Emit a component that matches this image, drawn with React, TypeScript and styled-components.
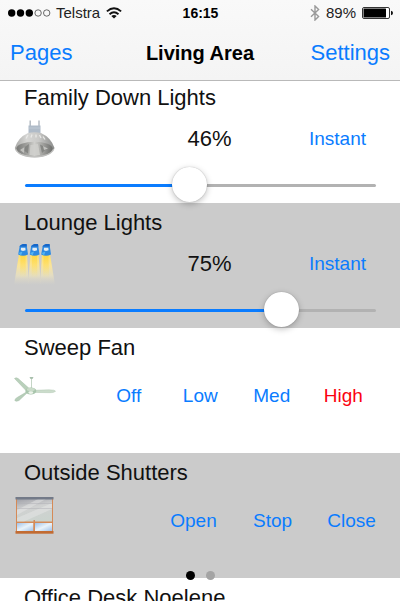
import React, { useState } from "react";
import styled, { createGlobalStyle } from "styled-components";

const BLUE = "#0a7cff";

const GlobalStyle = createGlobalStyle`
  * { box-sizing: border-box; }
  body {
    margin: 0;
    background: #fff;
    color: #000;
    font-family: "Liberation Sans", Arial, sans-serif;
  }
`;

const Screen = styled.div`
  position: relative;
  display: flex;
  flex-direction: column;
  height: 100vh;
  overflow: hidden;
`;

const Header = styled.header`
  position: relative;
  z-index: 1;
  flex: none;
  background: linear-gradient(#f9f9f9, #f4f4f4);
  border-bottom: 1px solid #b9b9b9;
`;

const StatusBar = styled.div`
  display: grid;
  grid-template-columns: 1fr auto 1fr;
  align-items: center;
  height: 26px;
  padding: 0 7px 0 8px;
  font-size: 15px;
  line-height: 20px;
  color: #222;
`;

const StatusGroup = styled.div<{ $end?: boolean }>`
  display: flex;
  align-items: center;
  justify-content: ${(p) => (p.$end ? "flex-end" : "flex-start")};
  gap: ${(p) => (p.$end ? 6 : 5)}px;
`;

const Clock = styled.time`
  font-size: 14px;
  font-weight: 700;
  color: #000;
`;

const NavBar = styled.nav`
  display: grid;
  grid-template-columns: 1fr auto 1fr;
  align-items: center;
  height: 54px;
  padding: 0 10px;
`;

const PageTitle = styled.h1`
  margin: 0;
  font-size: 20px;
  line-height: 24px;
  font-weight: 700;
`;

const TextButton = styled.button<{ $size?: number; $active?: boolean; $end?: boolean }>`
  padding: 0;
  border: 0;
  background: none;
  font-family: inherit;
  font-size: ${(p) => p.$size ?? 19}px;
  line-height: 24px;
  color: ${(p) => (p.$active ? "#fb0210" : BLUE)};
  justify-self: ${(p) => (p.$end ? "end" : "start")};
  cursor: pointer;
`;

const DeviceList = styled.ul`
  flex: 1;
  min-height: 0;
  margin: -3px 0 0;
  padding: 0;
  overflow: hidden;
  list-style: none;
`;

const Device = styled.li`
  display: flex;
  flex-direction: column;
  height: 125px;
  padding-top: 7px;
  background: #fff;

  &:nth-child(even) {
    background: #cbcbcb;
  }
`;

const DeviceName = styled.h2`
  margin: 0;
  padding-left: 24px;
  font-size: 22px;
  line-height: 26px;
  font-weight: 400;
  color: #111;
`;

const Controls = styled.div<{ $tall?: boolean }>`
  display: flex;
  align-items: center;
  height: ${(p) => (p.$tall ? 70 : 56)}px;
  padding-left: 14px;
`;

const IconBox = styled.div`
  flex: none;
  align-self: flex-start;
  width: 42px;
  height: 42px;
  margin-top: 8px;

  svg {
    display: block;
  }
`;

const Level = styled.output`
  flex: 1;
  margin-left: 54px;
  font-size: 22px;
  line-height: 24px;
  text-align: center;
  color: #111;
`;

const InstantSlot = styled.div`
  margin-right: 34px;
`;

const Choices = styled.div<{ $start: number; $end: number }>`
  flex: 1;
  display: grid;
  grid-auto-flow: column;
  grid-auto-columns: 1fr;
  margin: 0 ${(p) => p.$end}px 0 ${(p) => p.$start}px;

  ${TextButton} {
    justify-self: center;
  }
`;

const Slider = styled.input`
  appearance: none;
  display: block;
  height: 36px;
  margin: 0 24px 0 25px;
  background: none;
  cursor: pointer;

  &::-webkit-slider-runnable-track {
    height: 3px;
    border-radius: 2px;
    background: linear-gradient(
      to right,
      ${BLUE} var(--fill),
      #b2b2b2 var(--fill)
    );
  }

  &::-webkit-slider-thumb {
    appearance: none;
    width: 35px;
    height: 35px;
    margin-top: -17px;
    border-radius: 50%;
    background: #fff;
    box-shadow: 0 0 1px rgba(0, 0, 0, 0.3), 0 2px 6px rgba(0, 0, 0, 0.25);
  }
`;

const PageDots = styled.div`
  position: absolute;
  z-index: 1;
  left: 0;
  right: 0;
  bottom: 21px;
  display: flex;
  justify-content: center;
  gap: 11px;
`;

const PageDot = styled.button<{ $current?: boolean }>`
  width: 9px;
  height: 9px;
  padding: 0;
  border: 0;
  border-radius: 50%;
  background: ${(p) => (p.$current ? "#000" : "#a4a4a4")};
`;

const SignalIcon = () => (
  <svg width="43" height="10" viewBox="0 0 43 10" role="img" aria-label="Signal strength">
    <circle cx="3.7" cy="5" r="3.7" fill="#000" />
    <circle cx="12.5" cy="5" r="3.7" fill="#000" />
    <circle cx="21.3" cy="5" r="3.7" fill="#000" />
    <circle cx="30.1" cy="5" r="3.2" fill="none" stroke="#444" strokeWidth="0.8" />
    <circle cx="38.7" cy="5" r="3.2" fill="none" stroke="#444" strokeWidth="0.8" />
  </svg>
);

const WifiIcon = () => (
  <svg width="18" height="12" viewBox="0 0 18 12" role="img" aria-label="Wi-Fi">
    <g fill="none" stroke="#111" strokeWidth="1.9">
      <path d="M1.9 4.4 Q9 -1.9 16.1 4.4" />
      <path d="M4.5 7.2 Q9 3.2 13.5 7.2" />
    </g>
    <path d="M9 11.6 L6.3 9 Q9 6.9 11.7 9 Z" fill="#111" />
  </svg>
);

const BluetoothIcon = () => (
  <svg width="10" height="16" viewBox="0 0 10 16" role="img" aria-label="Bluetooth">
    <path
      d="M1 4.2 L8.6 11.4 L5 15 V1 L8.6 4.6 L1 11.8"
      fill="none"
      stroke="#999"
      strokeWidth="1.4"
    />
  </svg>
);

const BatteryIcon = () => (
  <svg width="31" height="12" viewBox="0 0 31 12" role="img" aria-label="Battery">
    <rect x="0.5" y="0.5" width="27" height="11" rx="1.5" fill="#fff" stroke="#333" />
    <rect x="1.5" y="1.5" width="22.5" height="9" rx="0.5" fill="#000" />
    <path d="M29 3.8 Q31 4.2 31 6 T29 8.2 Z" fill="#111" />
  </svg>
);

const DownlightIcon = () => (
  <svg width="42" height="42" viewBox="0 0 42 42" aria-hidden="true">
    <defs>
      <linearGradient id="reflector" x1="0" y1="0" x2="1" y2="0">
        <stop offset="0" stopColor="#a9a9a7" />
        <stop offset="0.3" stopColor="#d6d6d4" />
        <stop offset="0.6" stopColor="#c9c9c7" />
        <stop offset="1" stopColor="#8b8c8b" />
      </linearGradient>
      <linearGradient id="bowl" x1="0" y1="0" x2="1" y2="0">
        <stop offset="0" stopColor="#777876" />
        <stop offset="0.3" stopColor="#a3a3a0" />
        <stop offset="0.5" stopColor="#cfcfcc" />
        <stop offset="0.75" stopColor="#9d9d9a" />
        <stop offset="1" stopColor="#6c6d6b" />
      </linearGradient>
    </defs>
    <path d="M16.2 1.5 V8 M25 1.5 V8" stroke="#b0b7bf" strokeWidth="1.4" />
    <path d="M14.5 6.5 H26.5 V15 H14.5 Z" fill="#afbbc8" />
    <path d="M15 9 H26" stroke="#c3cdd7" strokeWidth="0.8" />
    <path d="M14 14 Q20.5 12.5 27 14 Q37 18.5 40.5 29 Q40 31 36 34.5 Q29 38.5 20.5 38.5 Q12 38.5 5 34.5 Q1 31 0.8 29 Q4 18.5 14 14 Z" fill="url(#reflector)" />
    <path d="M12 19.5 L14 16 M17 18.5 L18 15.5 M22 18.5 V15.5 M27 19 L25.5 16 M31 20.5 L29 17.5" stroke="#e9e9e7" strokeWidth="1.3" />
    <ellipse cx="20.5" cy="30" rx="18.2" ry="7.3" fill="url(#bowl)" />
    <path d="M8 30 L15 25 L14 34.5 Z M26 25.5 L33 29 L28 34 Z" fill="#7d7e7c" opacity="0.8" />
    <path d="M16.5 26 L24 25 L26 36 H15.5 Z" fill="#d0d0cd" opacity="0.85" />
    <path d="M6 31 L10.5 28 L10 34 Z M29 27 L34 29.5 L30 31 Z" fill="#c1c1be" />
    <path d="M1.5 30 Q5 37.8 20.5 37.8 Q36 37.8 39.8 30" fill="none" stroke="#bfbfbd" strokeWidth="1.2" />
  </svg>
);

const SpotsIcon = () => (
  <svg width="42" height="42" viewBox="0 0 42 42" aria-hidden="true">
    <defs>
      <linearGradient id="beam" x1="0" y1="0" x2="0" y2="1">
        <stop offset="0" stopColor="#ffdf62" />
        <stop offset="0.35" stopColor="#fae496" />
        <stop offset="0.7" stopColor="#ebe2c0" stopOpacity="0.75" />
        <stop offset="1" stopColor="#ddd8c8" stopOpacity="0" />
      </linearGradient>
      <linearGradient id="beamCore" x1="0" y1="0" x2="0" y2="1">
        <stop offset="0" stopColor="#ffd646" />
        <stop offset="1" stopColor="#ffe56b" stopOpacity="0" />
      </linearGradient>
    </defs>
    <path d="M5 10 H13 L15 41 H0 Z" fill="url(#beam)" />
    <path d="M16.5 10 H24.5 L27 41 H14 Z" fill="url(#beam)" />
    <path d="M28 10 H36 L41 41 H26 Z" fill="url(#beam)" />
    {[9, 20.5, 32].map((x) => (
      <g key={x} transform={`translate(${x} 0)`}>
        <path d="M-2.5 11 H2.5 L3 34 H-3 Z" fill="url(#beamCore)" />
        <path d="M-3.3 2 Q0 -1 3.5 0 L5 10.5 Q0 13 -4.8 10.5 Z" fill="#2d8ae2" />
        <path d="M-3.3 2 Q0 -1 3.5 0 L3.8 2.5 H-3.4 Z" fill="#1766c8" />
        <path d="M-2 3.8 H2.3 L2.6 6.2 L0 7 L-2.2 6.2 Z" fill="#e4edf4" />
        <path d="M-4.5 9 L-0.5 7.5 L-2 11.5 Z" fill="#54b4f3" />
      </g>
    ))}
  </svg>
);

const FanIcon = () => (
  <svg width="42" height="42" viewBox="0 0 42 42" aria-hidden="true">
    <path d="M17.5 9 V19" stroke="#c5d5c6" strokeWidth="1" />
    <path d="M15.5 8 H19.5 L18.5 10 H16.5 Z" fill="#a9c0ad" />
    <path d="M0.5 9.5 Q2 8 4.2 9.6 L15 19.3 L12 21.5 Z" fill="#b9d0bb" stroke="#a6bfa9" strokeWidth="0.5" />
    <path d="M20 21.3 L35 20.8 Q41 20.8 41.5 22.3 Q40 24 35 23.7 L20 23.4 Z" fill="#cbdccb" stroke="#b3c9b4" strokeWidth="0.5" />
    <path d="M14 23 L5 31.5 Q2 33 0.8 31.5 Q1 29.5 3.5 28.3 L12 23.3 Z" fill="#b7ceb9" stroke="#a3bca6" strokeWidth="0.5" />
    <ellipse cx="16.8" cy="22" rx="5.5" ry="3.4" fill="#a8c5ac" />
    <ellipse cx="16.8" cy="20.5" rx="4" ry="1.7" fill="#cadbc9" />
    <ellipse cx="16.8" cy="23.6" rx="2.5" ry="1.4" fill="#edf3eb" />
  </svg>
);

const ShutterIcon = () => (
  <svg width="42" height="42" viewBox="0 0 42 42" aria-hidden="true">
    <defs>
      <linearGradient id="blind" x1="0.2" y1="0" x2="0.5" y2="1">
        <stop offset="0" stopColor="#a5a6ad" />
        <stop offset="0.4" stopColor="#d0d1d1" />
        <stop offset="1" stopColor="#cbd3ce" />
      </linearGradient>
      <linearGradient id="glass" x1="0" y1="0" x2="1" y2="1">
        <stop offset="0" stopColor="#9fc2ea" />
        <stop offset="0.5" stopColor="#eaf3fa" />
        <stop offset="1" stopColor="#9fc2ea" />
      </linearGradient>
    </defs>
    <rect x="2" y="4" width="37" height="35" fill="#d58a57" />
    <rect x="3" y="5" width="35" height="22.5" fill="url(#blind)" />
    <path d="M3 16 L24 5 H32 L3 21 Z M3 24 L38 9 V15 L10 27.5 H3 Z" fill="#e8e9e8" opacity="0.45" />
    <path d="M3 9.5 H38 M3 14.5 H38" stroke="#b0b1b6" strokeWidth="0.5" />
    <rect x="3" y="29" width="16.5" height="8" fill="url(#glass)" />
    <rect x="21" y="29" width="17" height="8" fill="url(#glass)" />
    <rect x="19.5" y="26" width="1.5" height="11" fill="#d58a57" />
    <rect x="1.5" y="3" width="38" height="2.5" fill="#737a88" />
    <rect x="1.5" y="37" width="38" height="2.7" fill="#c26b32" />
  </svg>
);

type DimmerProps = { name: string; initial: number; icon: React.ReactNode };

function Dimmer({ name, initial, icon }: DimmerProps) {
  const [level, setLevel] = useState(initial);
  const fill = { "--fill": `${level}%` } as React.CSSProperties;
  return (
    <Device>
      <DeviceName>{name}</DeviceName>
      <Controls>
        <IconBox>{icon}</IconBox>
        <Level>{Math.floor(level)}%</Level>
        <InstantSlot>
          <TextButton type="button">Instant</TextButton>
        </InstantSlot>
      </Controls>
      <Slider
        type="range"
        aria-label={`${name} level`}
        min={0}
        max={100}
        step="any"
        value={level}
        style={fill}
        onChange={(e) => setLevel(Number(e.target.value))}
      />
    </Device>
  );
}

type SwitchProps = {
  name: string;
  options: string[];
  initial?: string;
  icon: React.ReactNode;
  start: number;
  end: number;
};

function SwitchGroup({ name, options, initial, icon, start, end }: SwitchProps) {
  const [active, setActive] = useState(initial);
  return (
    <Device>
      <DeviceName>{name}</DeviceName>
      <Controls $tall>
        <IconBox>{icon}</IconBox>
        <Choices $start={start} $end={end}>
          {options.map((option) => (
            <TextButton
              key={option}
              type="button"
              $active={option === active}
              aria-pressed={option === active}
              onClick={() => setActive(option)}
            >
              {option}
            </TextButton>
          ))}
        </Choices>
      </Controls>
    </Device>
  );
}

export default function App() {
  return (
    <>
      <GlobalStyle />
      <Screen>
        <Header>
          <StatusBar>
            <StatusGroup>
              <SignalIcon />
              <span>Telstra</span>
              <WifiIcon />
            </StatusGroup>
            <Clock>16:15</Clock>
            <StatusGroup $end>
              <BluetoothIcon />
              <span>89%</span>
              <BatteryIcon />
            </StatusGroup>
          </StatusBar>
          <NavBar>
            <TextButton type="button" $size={22}>Pages</TextButton>
            <PageTitle>Living Area</PageTitle>
            <TextButton type="button" $size={22} $end>Settings</TextButton>
          </NavBar>
        </Header>
        <DeviceList>
          <Dimmer name="Family Down Lights" initial={46.5} icon={<DownlightIcon />} />
          <Dimmer name="Lounge Lights" initial={75.7} icon={<SpotsIcon />} />
          <SwitchGroup
            name="Sweep Fan"
            options={["Off", "Low", "Med", "High"]}
            initial="High"
            icon={<FanIcon />}
            start={37}
            end={21}
          />
          <SwitchGroup
            name="Outside Shutters"
            options={["Open", "Stop", "Close"]}
            icon={<ShutterIcon />}
            start={98}
            end={9}
          />
          <Device>
            <DeviceName>Office Desk Noelene</DeviceName>
          </Device>
        </DeviceList>
        <PageDots>
          <PageDot type="button" aria-label="Page 1" $current />
          <PageDot type="button" aria-label="Page 2" />
        </PageDots>
      </Screen>
    </>
  );
}
